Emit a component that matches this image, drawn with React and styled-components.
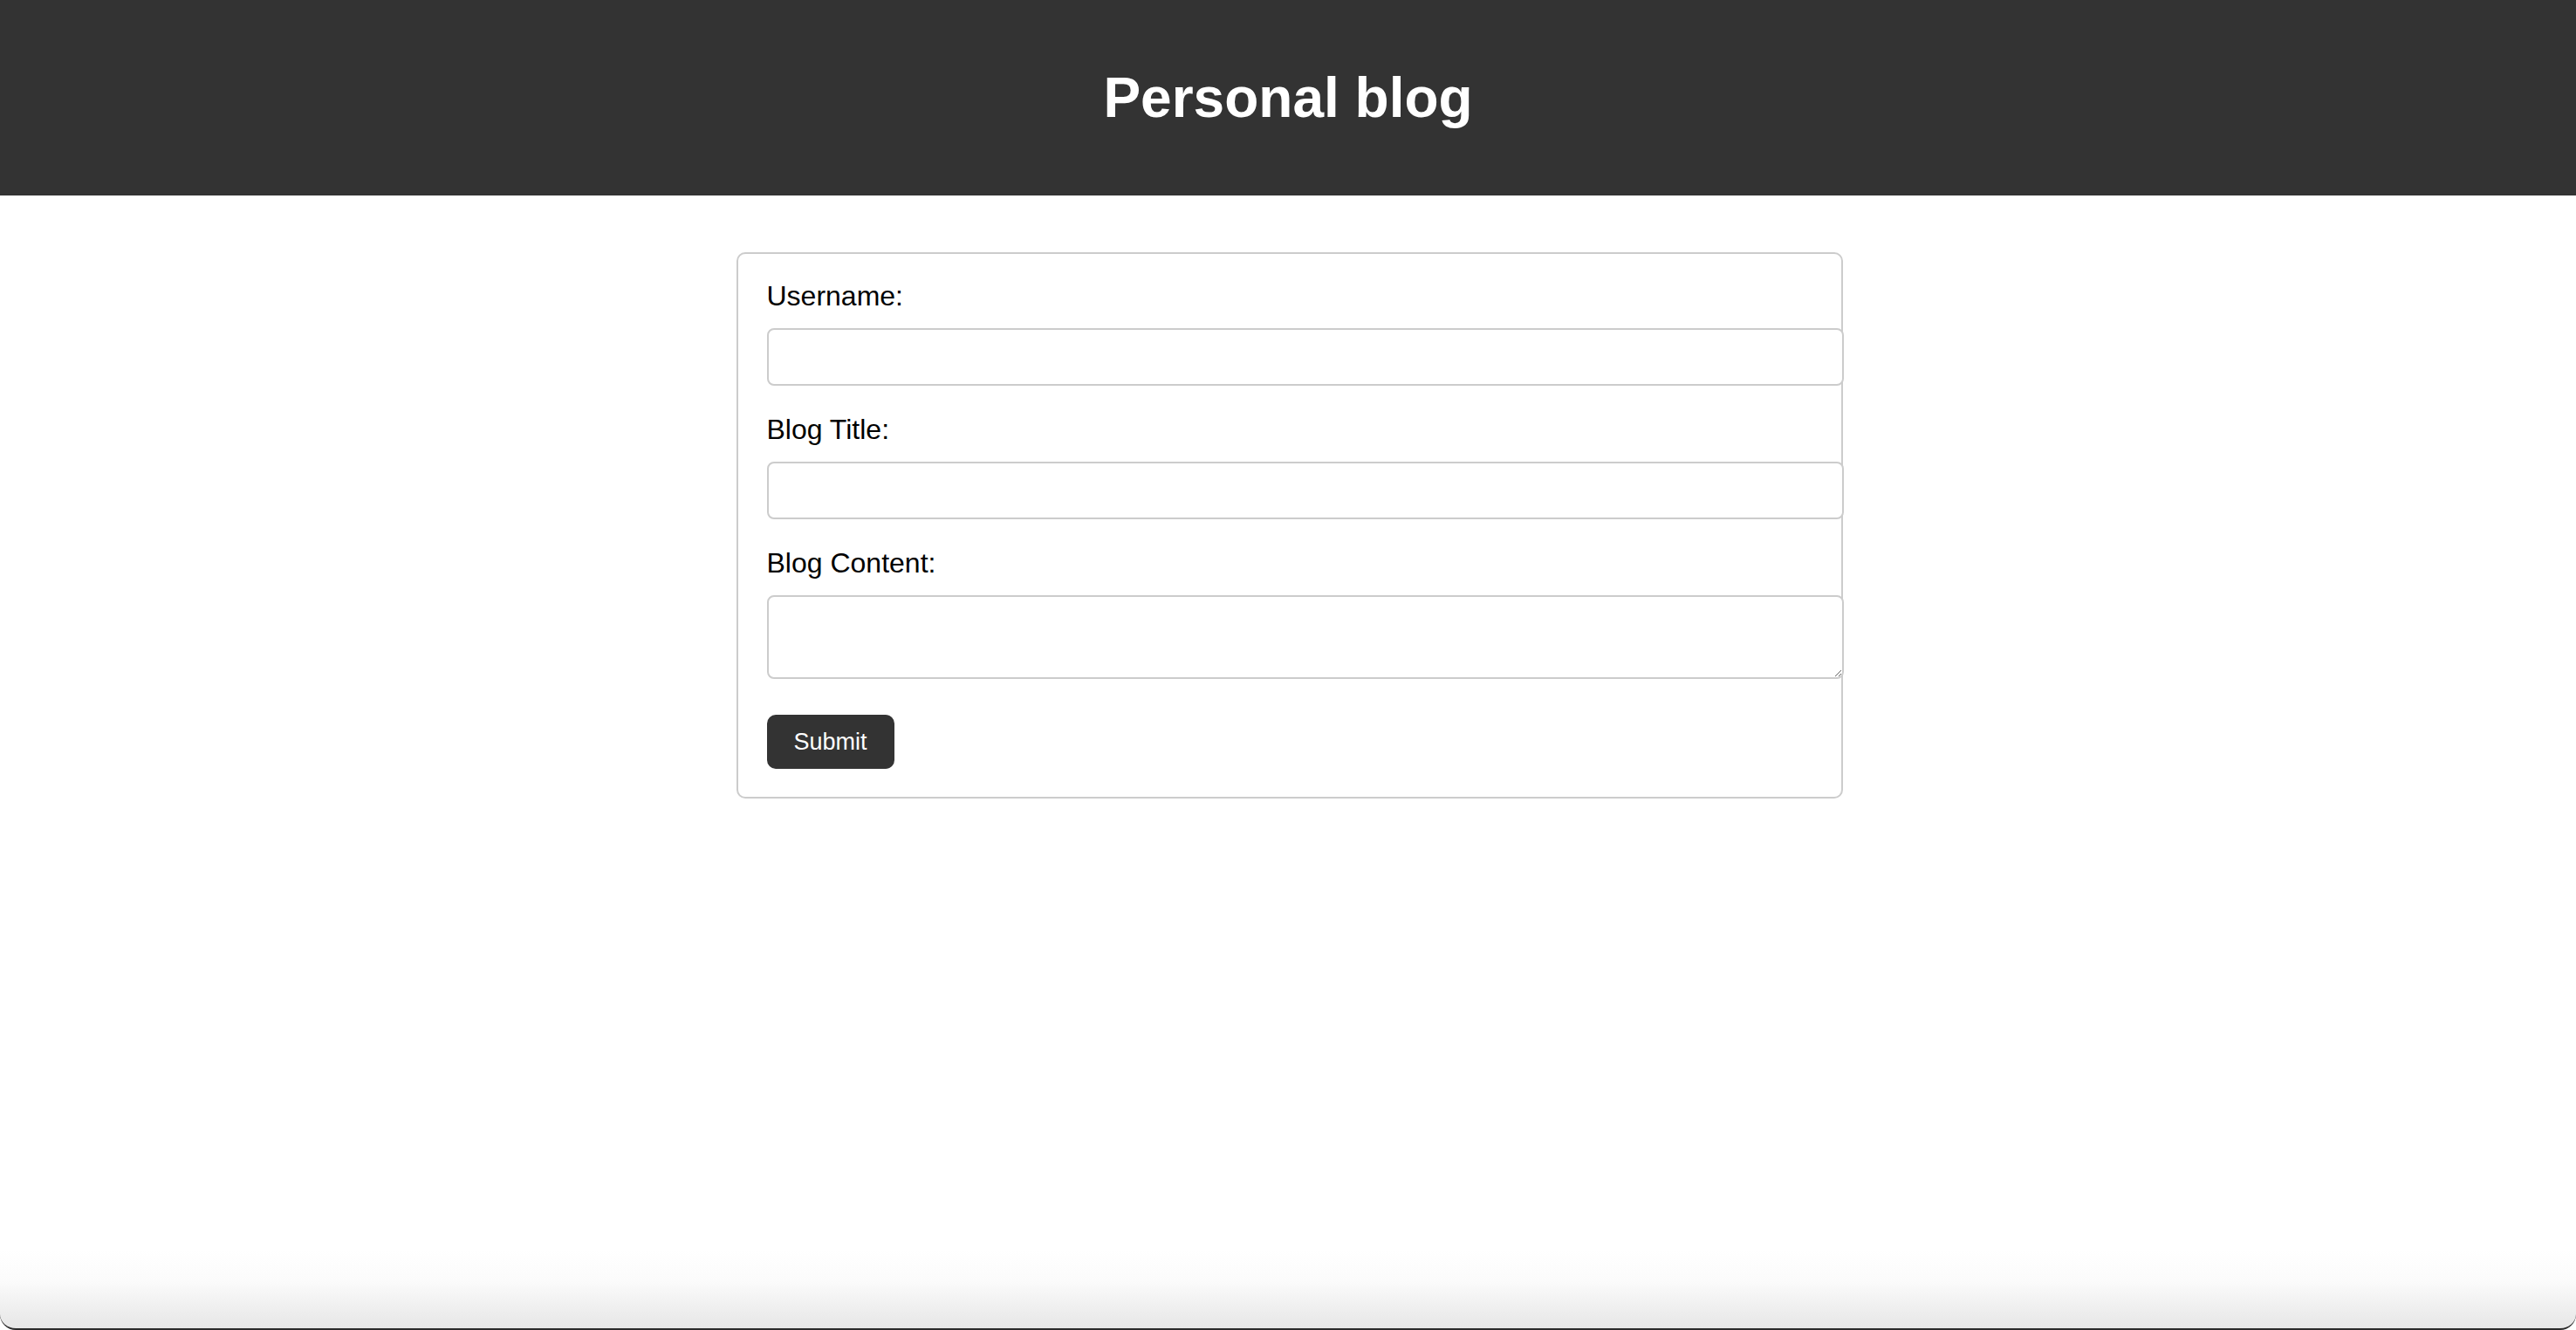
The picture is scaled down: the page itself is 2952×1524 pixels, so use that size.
import React from 'react'
import styled, { createGlobalStyle } from 'styled-components'

const GlobalStyle = createGlobalStyle`
  html, body {
    margin: 0;
    padding: 0;
    background: #fff;
    font-family: "Liberation Sans", Arial, sans-serif;
  }
`

const Page = styled.div`
  display: flex;
  flex-direction: column;
  min-height: 100vh;
`

const Header = styled.header`
  display: flex;
  align-items: center;
  justify-content: center;
  height: 224px;
  background: #333333;
`

const Title = styled.h1`
  margin: 0;
  color: #fff;
  font-size: 64px;
  font-weight: bold;
  line-height: 1;
`

const Main = styled.main`
  flex: 1;
  display: flex;
  justify-content: center;
  align-items: flex-start;
  padding: 65px 0 0 3px;
`

const Form = styled.form`
  width: 1268px;
  box-sizing: border-box;
  border: 2px solid #cccccc;
  border-radius: 10px;
  padding: 30px 33px 32px;
  background: #fff;
`

const Label = styled.label`
  display: block;
  font-size: 32px;
  line-height: 36px;
  color: #000;
  margin-bottom: 19px;
`

const Input = styled.input`
  display: block;
  box-sizing: border-box;
  width: calc(100% + 36px);
  height: 66px;
  margin: 0 0 32px;
  padding: 0 16px;
  border: 2px solid #cccccc;
  border-radius: 8px;
  font-family: inherit;
  font-size: 28px;
  background: #fff;
  outline: none;
`

const TextArea = styled.textarea`
  display: block;
  box-sizing: border-box;
  width: calc(100% + 36px);
  height: 96px;
  margin: 0 0 41px;
  padding: 16px;
  border: 2px solid #cccccc;
  border-radius: 8px;
  font-family: inherit;
  font-size: 28px;
  background: #fff;
  outline: none;
`

const Button = styled.button`
  display: block;
  width: 146px;
  height: 62px;
  padding: 0;
  border: none;
  border-radius: 10px;
  background: #333333;
  color: #fff;
  font-family: inherit;
  font-size: 27px;
  cursor: pointer;
`

const Shade = styled.div`
  height: 90px;
  background: linear-gradient(to bottom, #ffffff 0%, #fbfbfb 40%, #e6e6e6 100%);
  border-bottom: 2px solid #2b2b2b;
  border-radius: 0 0 18px 18px;
`

const fields = [
  { id: 'username', label: 'Username:' },
  { id: 'title', label: 'Blog Title:' },
]

export default function App() {
  return (
    <Page>
      <GlobalStyle />
      <Header>
        <Title>Personal blog</Title>
      </Header>
      <Main>
        <Form onSubmit={(e) => e.preventDefault()}>
          {fields.map((f) => (
            <React.Fragment key={f.id}>
              <Label htmlFor={f.id}>{f.label}</Label>
              <Input id={f.id} type="text" />
            </React.Fragment>
          ))}
          <Label htmlFor="content">Blog Content:</Label>
          <TextArea id="content" />
          <Button type="submit">Submit</Button>
        </Form>
      </Main>
      <Shade />
    </Page>
  )
}
